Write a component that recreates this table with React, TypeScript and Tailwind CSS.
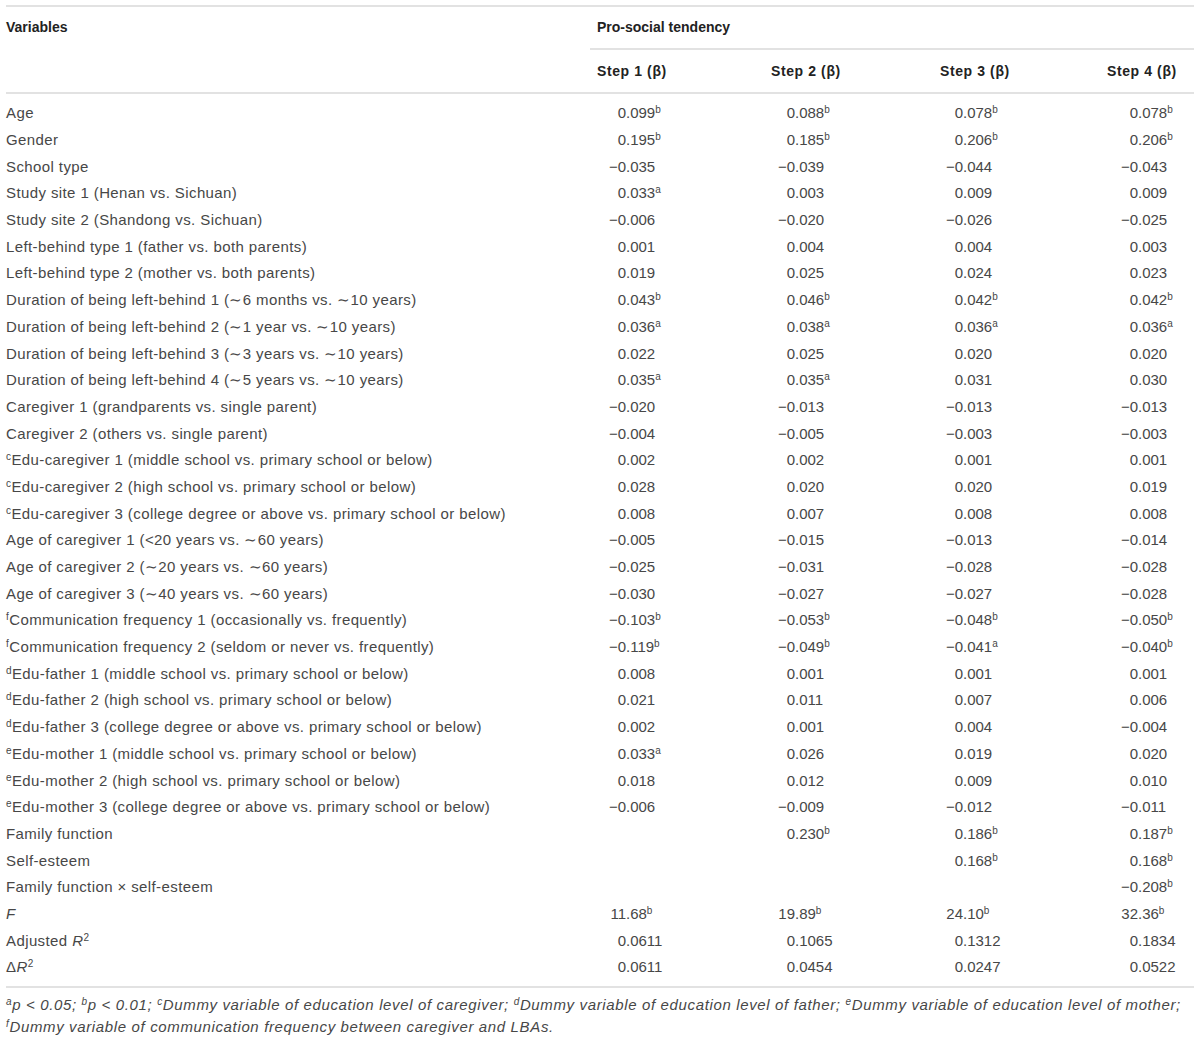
import React from "react";

type Row = { label: React.ReactNode; vals: string[] };

const S = ({ c }: { c: string }) => <sup className="text-[10px]">{c}</sup>;

const L = (pre: string, text: string) => (
  <>
    <S c={pre} />
    {text}
  </>
);

const rows: Row[] = [
  { label: "Age", vals: ["0.099b", "0.088b", "0.078b", "0.078b"] },
  { label: "Gender", vals: ["0.195b", "0.185b", "0.206b", "0.206b"] },
  { label: "School type", vals: ["−0.035", "−0.039", "−0.044", "−0.043"] },
  { label: "Study site 1 (Henan vs. Sichuan)", vals: ["0.033a", "0.003", "0.009", "0.009"] },
  { label: "Study site 2 (Shandong vs. Sichuan)", vals: ["−0.006", "−0.020", "−0.026", "−0.025"] },
  { label: "Left-behind type 1 (father vs. both parents)", vals: ["0.001", "0.004", "0.004", "0.003"] },
  { label: "Left-behind type 2 (mother vs. both parents)", vals: ["0.019", "0.025", "0.024", "0.023"] },
  { label: "Duration of being left-behind 1 (∼6 months vs. ∼10 years)", vals: ["0.043b", "0.046b", "0.042b", "0.042b"] },
  { label: "Duration of being left-behind 2 (∼1 year vs. ∼10 years)", vals: ["0.036a", "0.038a", "0.036a", "0.036a"] },
  { label: "Duration of being left-behind 3 (∼3 years vs. ∼10 years)", vals: ["0.022", "0.025", "0.020", "0.020"] },
  { label: "Duration of being left-behind 4 (∼5 years vs. ∼10 years)", vals: ["0.035a", "0.035a", "0.031", "0.030"] },
  { label: "Caregiver 1 (grandparents vs. single parent)", vals: ["−0.020", "−0.013", "−0.013", "−0.013"] },
  { label: "Caregiver 2 (others vs. single parent)", vals: ["−0.004", "−0.005", "−0.003", "−0.003"] },
  { label: L("c", "Edu-caregiver 1 (middle school vs. primary school or below)"), vals: ["0.002", "0.002", "0.001", "0.001"] },
  { label: L("c", "Edu-caregiver 2 (high school vs. primary school or below)"), vals: ["0.028", "0.020", "0.020", "0.019"] },
  { label: L("c", "Edu-caregiver 3 (college degree or above vs. primary school or below)"), vals: ["0.008", "0.007", "0.008", "0.008"] },
  { label: "Age of caregiver 1 (<20 years vs. ∼60 years)", vals: ["−0.005", "−0.015", "−0.013", "−0.014"] },
  { label: "Age of caregiver 2 (∼20 years vs. ∼60 years)", vals: ["−0.025", "−0.031", "−0.028", "−0.028"] },
  { label: "Age of caregiver 3 (∼40 years vs. ∼60 years)", vals: ["−0.030", "−0.027", "−0.027", "−0.028"] },
  { label: L("f", "Communication frequency 1 (occasionally vs. frequently)"), vals: ["−0.103b", "−0.053b", "−0.048b", "−0.050b"] },
  { label: L("f", "Communication frequency 2 (seldom or never vs. frequently)"), vals: ["−0.119b", "−0.049b", "−0.041a", "−0.040b"] },
  { label: L("d", "Edu-father 1 (middle school vs. primary school or below)"), vals: ["0.008", "0.001", "0.001", "0.001"] },
  { label: L("d", "Edu-father 2 (high school vs. primary school or below)"), vals: ["0.021", "0.011", "0.007", "0.006"] },
  { label: L("d", "Edu-father 3 (college degree or above vs. primary school or below)"), vals: ["0.002", "0.001", "0.004", "−0.004"] },
  { label: L("e", "Edu-mother 1 (middle school vs. primary school or below)"), vals: ["0.033a", "0.026", "0.019", "0.020"] },
  { label: L("e", "Edu-mother 2 (high school vs. primary school or below)"), vals: ["0.018", "0.012", "0.009", "0.010"] },
  { label: L("e", "Edu-mother 3 (college degree or above vs. primary school or below)"), vals: ["−0.006", "−0.009", "−0.012", "−0.011"] },
  { label: "Family function", vals: ["", "0.230b", "0.186b", "0.187b"] },
  { label: "Self-esteem", vals: ["", "", "0.168b", "0.168b"] },
  { label: "Family function × self-esteem", vals: ["", "", "", "−0.208b"] },
  { label: <span className="italic">F</span>, vals: ["11.68b", "19.89b", "24.10b", "32.36b"] },
  {
    label: (
      <>
        Adjusted <span className="italic">R</span>
        <S c="2" />
      </>
    ),
    vals: ["0.0611", "0.1065", "0.1312", "0.1834"],
  },
  {
    label: (
      <>
        Δ<span className="italic">R</span>
        <S c="2" />
      </>
    ),
    vals: ["0.0611", "0.0454", "0.0247", "0.0522"],
  },
];

const valPad = ["pl-[14px]", "pl-[8px]", "pl-[8px]", "pl-[16px]"];
const headPad = ["pl-[7px]", "pl-[6px]", "pl-[7px]", "pl-[7px]"];

function Val({ v }: { v: string }) {
  if (!v) return null;
  const m = v.match(/^(−?\d+)\.(\d+)([a-z]?)$/);
  if (!m) return <span>{v}</span>;
  return (
    <span className="whitespace-nowrap">
      <span className="inline-block w-[22px] text-right">{m[1]}</span>
      <span>.{m[2]}</span>
      {m[3] && <S c={m[3]} />}
    </span>
  );
}

const grid = "grid grid-cols-[584px_175px_168px_167px_94px]";

export default function App() {
  return (
    <div
      className="bg-white w-[1200px] h-[1041px] px-[6px] pt-[5px] text-[#474747]"
      style={{ fontFamily: "'Liberation Sans', Arial, sans-serif" }}
    >
      <div className="border-t-2 border-[#e2e2e2]">
        {/* header */}
        <div className={`${grid} border-b-2 border-[#e2e2e2]`}>
          <div className="row-span-2 pt-[10px] text-[14px] font-bold text-[#222] leading-[20px]">Variables</div>
          <div className="col-span-4 h-[43px] flex items-center pl-[7px] text-[14px] font-bold text-[#222] border-b-2 border-[#e2e2e2]">
            Pro-social tendency
          </div>
          {[1, 2, 3, 4].map((n, i) => (
            <div
              key={n}
              className={`h-[42px] flex items-center ${headPad[i]} text-[14px] font-bold text-[#222] tracking-[0.6px] whitespace-nowrap`}
            >
              Step {n} (β)
            </div>
          ))}
        </div>
        {/* body */}
        <div className="pt-[6px] pb-[5px] border-b-2 border-[#e2e2e2] text-[15px]">
          {rows.map((r, ri) => (
            <div key={ri} className={`${grid} h-[26.7px] items-center leading-[20px]`}>
              <div className="whitespace-nowrap tracking-[0.4px]">{r.label}</div>
              {r.vals.map((v, i) => (
                <div key={i} className={valPad[i]}>
                  <Val v={v} />
                </div>
              ))}
            </div>
          ))}
        </div>
        {/* footnote */}
        <div className="pt-[6px] text-[15px] leading-[22px] italic tracking-[0.64px] whitespace-nowrap">
          <S c="a" />p &lt; 0.05; <S c="b" />p &lt; 0.01; <S c="c" />Dummy variable of education level of caregiver;{" "}
          <S c="d" />Dummy variable of education level of father; <S c="e" />Dummy variable of education level of mother;
          <br />
          <S c="f" />Dummy variable of communication frequency between caregiver and LBAs.
        </div>
      </div>
    </div>
  );
}
